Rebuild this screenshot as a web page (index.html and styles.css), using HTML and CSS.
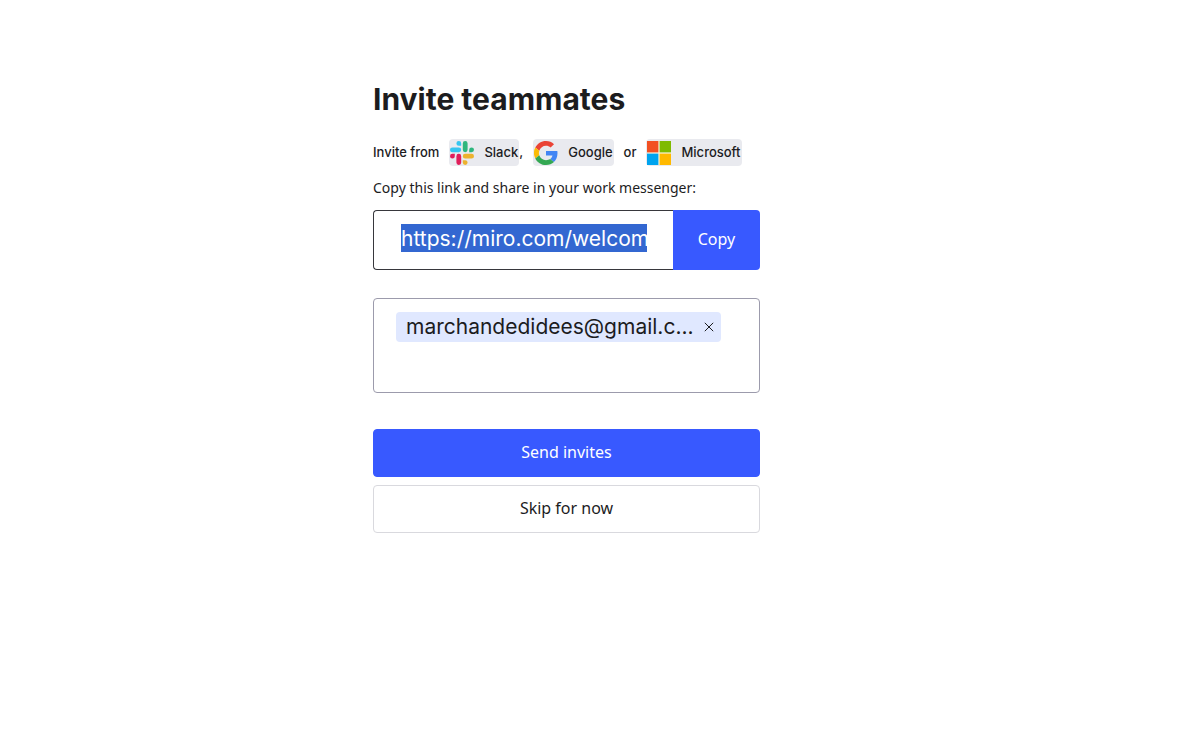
FILE: index.html
```html
<!DOCTYPE html>
<html lang="en">
<head>
<meta charset="utf-8">
<meta name="viewport" content="width=device-width, initial-scale=1">
<title>Invite teammates</title>
<link rel="stylesheet" href="styles.css">
</head>
<body>
<main class="page">
  <form class="invite">
    <h1 class="title">Invite teammates</h1>
    <div class="sources">
      <span class="lead">Invite from</span>
      <span class="item"><a class="source" href="#slack">
        <svg class="logo" viewBox="0 0 24 24" aria-hidden="true">
          <path fill="#36c5f0" d="M8.8 0a2.4 2.4 0 1 0 0 4.8h2.4V2.4A2.4 2.4 0 0 0 8.8 0zM8.8 6.4H2.4a2.4 2.4 0 1 0 0 4.8h6.4a2.4 2.4 0 1 0 0-4.8z"/>
          <path fill="#2eb67d" d="M24 8.8a2.4 2.4 0 1 0-4.8 0v2.4h2.4A2.4 2.4 0 0 0 24 8.8zM17.6 8.8V2.4a2.4 2.4 0 1 0-4.8 0v6.4a2.4 2.4 0 1 0 4.8 0z"/>
          <path fill="#ecb22e" d="M15.2 24a2.4 2.4 0 1 0 0-4.8h-2.4v2.4a2.4 2.4 0 0 0 2.4 2.4zM15.2 17.6h6.4a2.4 2.4 0 1 0 0-4.8h-6.4a2.4 2.4 0 1 0 0 4.8z"/>
          <path fill="#e01e5a" d="M0 15.2a2.4 2.4 0 1 0 4.8 0v-2.4H2.4A2.4 2.4 0 0 0 0 15.2zM6.4 15.2v6.4a2.4 2.4 0 1 0 4.8 0v-6.4a2.4 2.4 0 1 0-4.8 0z"/>
        </svg>Slack</a>,</span>
      <a class="source" href="#google">
        <svg class="logo" viewBox="0 0 48 48" aria-hidden="true">
          <path fill="#ea4335" d="M24 9.5c3.54 0 6.71 1.22 9.21 3.6l6.85-6.85C35.9 2.38 30.47 0 24 0 14.62 0 6.51 5.38 2.56 13.22l7.98 6.19C12.43 13.72 17.74 9.5 24 9.5z"/>
          <path fill="#4285f4" d="M46.98 24.55c0-1.57-.15-3.09-.38-4.55H24v9.02h12.94c-.58 2.96-2.26 5.48-4.78 7.18l7.73 6c4.51-4.18 7.09-10.36 7.09-17.65z"/>
          <path fill="#fbbc05" d="M10.53 28.59a14.5 14.5 0 0 1 0-9.18l-7.98-6.19a24 24 0 0 0 0 21.56z"/>
          <path fill="#34a853" d="M24 48c6.48 0 11.93-2.13 15.89-5.81l-7.73-6c-2.15 1.45-4.92 2.3-8.16 2.3-6.26 0-11.57-4.22-13.47-9.91l-7.98 6.19C6.51 42.62 14.62 48 24 48z"/>
        </svg>Google</a>
      <span>or</span>
      <a class="source" href="#microsoft">
        <svg class="logo" viewBox="0 0 24 24" aria-hidden="true">
          <path fill="#f9f4dc" d="M0 0h24v24H0z"/>
          <path fill="#f25022" d="M0 0h11.4v11.4H0z"/>
          <path fill="#7fba00" d="M12.6 0H24v11.4H12.6z"/>
          <path fill="#00a4ef" d="M0 12.6h11.4V24H0z"/>
          <path fill="#ffb900" d="M12.6 12.6H24V24H12.6z"/>
        </svg>Microsoft</a>
    </div>
    <label class="hint" for="link">Copy this link and share in your work messenger:</label>
    <div class="link-row">
      <div class="link-box">
        <input class="link" id="link" type="text" value="https://miro.com/welcome" readonly>
      </div>
      <button class="copy" type="button">Copy</button>
    </div>
    <div class="emails">
      <span class="chip">marchandedidees@gmail.c...
        <button class="remove" type="button" aria-label="Remove">
          <svg class="cross" viewBox="0 0 10 10" aria-hidden="true"><path d="M.8.8l8.4 8.4M9.2.8L.8 9.2" fill="none" stroke="#1c1c1e"/></svg>
        </button>
      </span>
      <input class="entry" type="text" aria-label="Email addresses">
    </div>
    <button class="action send" type="submit">Send invites</button>
    <button class="action skip" type="button">Skip for now</button>
  </form>
</main>
</body>
</html>
```
FILE: styles.css
```css
* { box-sizing: border-box; }

body {
  margin: 0;
  background: #fff;
  color: #1c1c1e;
  font-family: Inter, "Liberation Sans", sans-serif;
}

button, input { font: inherit; color: inherit; }
button { cursor: pointer; }

.page {
  display: flex;
  justify-content: center;
  padding: 79px 62px 40px 0;
}

.invite {
  display: flex;
  flex-direction: column;
  width: 100%;
  max-width: 387px;
}

.title {
  margin: 0 0 20px;
  font-size: 30px;
  line-height: 40px;
  font-weight: 700;
}

.sources {
  display: flex;
  align-items: center;
  gap: 10px;
  font-size: 13px;
  line-height: 27px;
  font-weight: 500;
  white-space: nowrap;
}

.source {
  display: inline-flex;
  align-items: center;
  gap: 10px;
  height: 27px;
  padding: 0 1px 0 1px;
  border-radius: 4px;
  background: #e9eaef;
  color: inherit;
  text-decoration: none;
}

.item { display: flex; }
.logo { width: 24px; height: 24px; }

.hint {
  margin: 12px 0;
  font-family: "Noto Sans", sans-serif;
  font-size: 14px;
  line-height: 20px;
}

.link-row { display: flex; height: 60px; }

.link-box {
  flex: 1;
  min-width: 0;
  padding: 13px 26px 0 27px;
  border: 1px solid #37373c;
  border-right: 0;
  border-radius: 4px 0 0 4px;
}

.link {
  display: block;
  width: 100%;
  height: 28px;
  padding: 0;
  border: 0;
  outline: 0;
  background: #3367d1;
  color: #fff;
  font-size: 21px;
}

.copy {
  width: 87px;
  padding: 0 0 2px;
  border: 0;
  border-radius: 0 4px 4px 0;
  background: #3859ff;
  color: #fff;
  font-family: "Noto Sans", sans-serif;
  font-size: 16px;
}

.emails {
  display: flex;
  flex-direction: column;
  align-items: flex-start;
  min-height: 95px;
  margin: 28px 0 36px;
  padding: 13px 22px;
  border: 1px solid #9c9bac;
  border-radius: 4px;
}

.chip {
  display: flex;
  align-items: center;
  gap: 10px;
  height: 30px;
  padding: 0 7px 0 10px;
  border-radius: 4px;
  background: #e0e8ff;
  font-size: 21px;
  line-height: 30px;
}

.remove {
  display: flex;
  padding: 0;
  border: 0;
  background: none;
}

.cross { width: 10px; height: 10px; }

.entry {
  width: 100%;
  height: 30px;
  padding: 0;
  border: 0;
  outline: 0;
  background: none;
  font-size: 21px;
}

.action {
  height: 48px;
  padding: 0 16px 2px;
  border: 1px solid #d9d9de;
  border-radius: 4px;
  font-family: "Noto Sans", sans-serif;
  font-size: 16px;
}

.send {
  border-color: #3859ff;
  background: #3859ff;
  color: #fff;
}

.skip { margin-top: 8px; background: #fff; }
```
